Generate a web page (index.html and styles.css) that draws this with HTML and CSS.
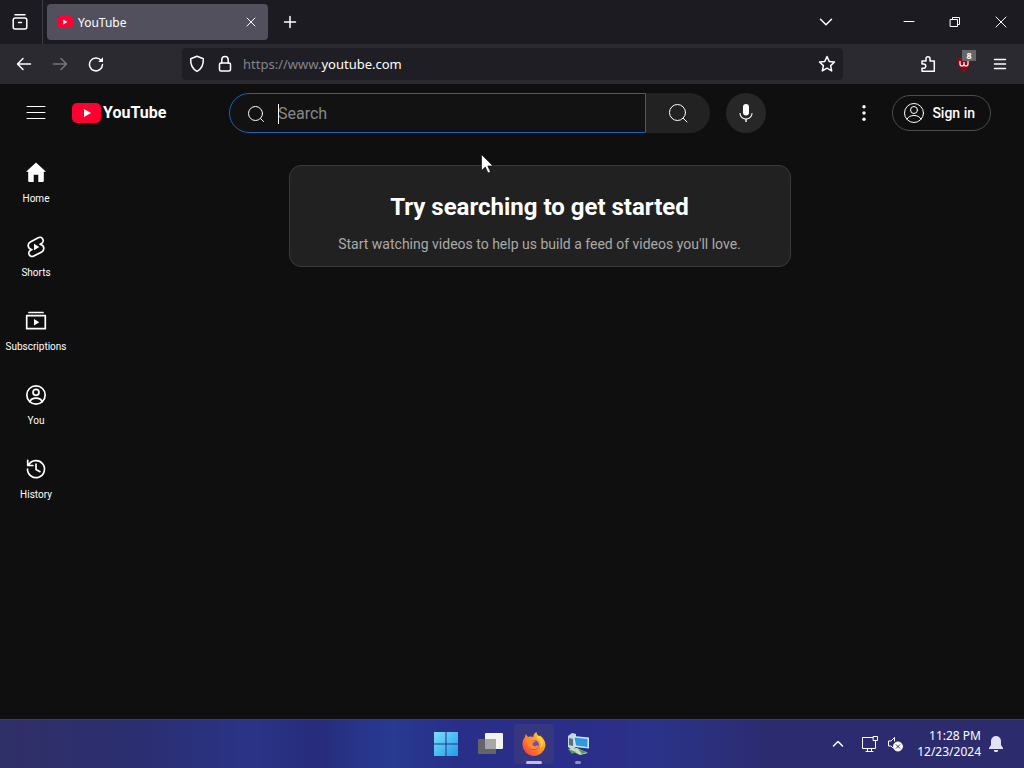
FILE: index.html
```html
<!DOCTYPE html>
<html lang="en">
<head>
<meta charset="utf-8">
<meta name="viewport" content="width=device-width, initial-scale=1">
<title>YouTube</title>
<link rel="stylesheet" href="styles.css">
</head>
<body>
<div class="screen">
  <header class="tabbar">
    <button class="view-button" aria-label="Recent browsing"><svg width="20" height="20" viewBox="0 0 20 20" class="line"><path d="M5 2.800h10M3.200 8.500V8a2 2 0 0 1 2-2h9.600a2 2 0 0 1 2 2v7a2 2 0 0 1-2 2H5.200a2 2 0 0 1-2-2zM8.500 10.500h3"/></svg></button>
    <div class="tab">
      <svg width="18" height="18" viewBox="0 0 18 18"><rect x="1" y="3" width="16" height="12" rx="4" fill="#f03"/><path d="M7.3 6.6v4.8L11.4 9z" fill="#fff"/></svg>
      <span class="tab-title">YouTube</span>
      <button class="tab-close" aria-label="Close tab"><svg width="12" height="12" viewBox="0 0 12 12" class="thin"><path d="M2 2l8 8M10 2l-8 8"/></svg></button>
    </div>
    <button class="new-tab" aria-label="New tab"><svg width="16" height="16" viewBox="0 0 16 16" class="line"><path d="M8 2.500v11M2.500 8h11"/></svg></button>
    <div class="window-controls">
      <button class="list-tabs" aria-label="List all tabs"><svg width="16" height="16" viewBox="0 0 16 16" class="line"><path d="M2.500 5.200L8 10.700l5.500-5.500"/></svg></button>
      <button aria-label="Minimize"><svg width="12" height="12" viewBox="0 0 12 12" class="thin"><path d="M1 5.500h10"/></svg></button>
      <button aria-label="Restore"><svg width="12" height="12" viewBox="0 0 12 12" class="thin"><path d="M1.500 3.500h7v7h-7zM3.500 3.500v-2h7v7h-2"/></svg></button>
      <button aria-label="Close"><svg width="12" height="12" viewBox="0 0 12 12" class="thin"><path d="M1 1l10 10M11 1L1 11"/></svg></button>
    </div>
  </header>

  <nav class="toolbar" aria-label="Navigation">
    <button class="tool" aria-label="Back"><svg width="16" height="16" viewBox="0 0 16 16" class="line"><path d="M14.500 8H1.500M7 2.500L1.500 8 7 13.500"/></svg></button>
    <button class="tool dim" aria-label="Forward"><svg width="16" height="16" viewBox="0 0 16 16" class="line"><path d="M1.500 8h13M9 2.500L14.500 8 9 13.500"/></svg></button>
    <button class="tool" aria-label="Reload"><svg width="16" height="16" viewBox="0 0 16 16" class="line"><path d="M13.200 4.500A6.500 6.500 0 1 0 14.500 8.500"/><path d="M15 1.200V6h-4.800z" fill="currentColor" stroke="none"/></svg></button>
    <div class="urlbar">
      <svg width="16" height="18" viewBox="0 0 16 18" class="line"><path d="M8 1.300L14.300 3.700c.3 5.500-1.300 9.900-6.300 12.700C3 13.600 1.400 9.200 1.700 3.700z"/></svg>
      <svg width="14" height="18" viewBox="0 0 14 18" class="line"><rect x="1.500" y="8" width="11" height="8" rx="1.500"/><path d="M3.800 8V4.800a3.200 3.200 0 0 1 6.400 0V8"/></svg>
      <a class="url" href="#"><span class="url-dim">https://www.</span>youtube.com</a>
      <button class="star" aria-label="Bookmark this page"><svg width="18" height="18" viewBox="0 0 18 18" class="line"><path d="M9 1.500l2.200 4.900 5.300.6-3.900 3.600 1.100 5.300L9 13.200l-4.700 2.700 1.100-5.300L1.500 7l5.300-.6z"/></svg></button>
    </div>
    <div class="extensions">
      <button class="tool" aria-label="Extensions"><svg width="16" height="18" viewBox="0 0 16 18" class="line"><path d="M2 6h4V3.800a2 2 0 0 1 4 0V6h4.300v10.300H2v-3h1.600a2 2 0 0 0 0-4.300H2z"/></svg></button>
      <button class="tool ublock" aria-label="Content blocker"><svg width="16" height="16" viewBox="0 0 16 16"><path d="M8 0c2 1.500 4 2 6 2 0 7-1 10-6 14C3 12 2 9 2 2c2 0 4-.5 6-2z" fill="#950513"/><path d="M4 5v3q0 2 2 2t2-2V6v2q0 2 2 2t2-2V5" fill="none" stroke="#fff" stroke-width="1.200"/></svg><span class="count">8</span></button>
      <button class="tool" aria-label="Application menu"><svg width="14" height="14" viewBox="0 0 14 14" class="line"><path d="M1.500 2.500h11M1.500 7h11M1.500 11.500h11"/></svg></button>
    </div>
  </nav>

  <div class="page">
    <header class="masthead">
      <div class="brand">
        <button class="plain" aria-label="Guide"><svg width="20" height="16" viewBox="0 0 20 16" class="thin"><path d="M1 1.500h18M1 7.500h18M1 13.500h18"/></svg></button>
        <a class="logo" href="#"><svg width="30" height="22" viewBox="0 0 30 22"><rect y="1" width="29" height="20" rx="5" fill="#ff0033"/><path d="M12 7v8l7-4z" fill="#fff"/></svg><span>YouTube</span></a>
      </div>
      <form class="search">
        <div class="field">
          <svg width="18" height="18" viewBox="0 0 18 18" class="thin"><circle cx="8.500" cy="8.500" r="7"/><path d="M13.500 13.500L16.500 16.500"/></svg>
          <div class="entry"><input type="text" placeholder="Search" aria-label="Search"><span class="caret"></span></div>
        </div>
        <button class="search-button" type="button" aria-label="Search"><svg width="20" height="20" viewBox="0 0 20 20" class="thin"><circle cx="9.500" cy="9.500" r="8"/><path d="M15.200 15.200L19 19"/></svg></button>
        <button class="mic" type="button" aria-label="Search with your voice"><svg width="24" height="24" viewBox="0 0 24 24"><path d="M12 3a3 3 0 0 0-3 3v5.500a3 3 0 0 0 6 0V6a3 3 0 0 0-3-3zM17.500 12h1c0 3.600-2.500 6.100-5.800 6.500V21h-1.400v-2.500c-3.300-.4-5.800-2.900-5.800-6.500h1.100c0 3.200 2.300 5.400 5.400 5.400s5.500-2.200 5.500-5.400z" fill="#fff"/></svg></button>
      </form>
      <div class="account">
        <button class="plain" aria-label="Settings"><svg width="24" height="24" viewBox="0 0 24 24" fill="#fff"><circle cx="12" cy="5.800" r="1.700"/><circle cx="12" cy="12" r="1.700"/><circle cx="12" cy="18.200" r="1.700"/></svg></button>
        <a class="signin" href="#"><svg width="22" height="22" viewBox="0 0 22 22" class="thin"><circle cx="11" cy="11" r="9.500"/><circle cx="11" cy="8" r="3.500"/><path d="M4 17.200c1.200-2.700 4-3.700 7-3.700s5.800 1 7 3.700"/></svg>Sign in</a>
      </div>
    </header>

    <div class="body">
      <nav class="guide" aria-label="Guide">
        <a href="#"><svg width="24" height="24" viewBox="0 0 24 24"><path d="M12 1.500L22 10.800h-2.200V20a1 1 0 0 1-1 1h-4.500v-7.200H9.700V21H5.200a1 1 0 0 1-1-1v-9.200H2z" fill="#fff"/></svg><span>Home</span></a>
        <a href="#"><svg width="24" height="24" viewBox="0 0 24 24"><path d="M14.200 2.700L6.300 6.900a4 4 0 0 0 .6 7.300l1 .3-1.300.7a3.300 3.300 0 0 0 3.200 5.900l7.900-4.200a4 4 0 0 0-.6-7.300l-1-.3 1.300-.7a3.300 3.300 0 0 0-3.200-5.900z" class="shape"/><path d="M10 8.700v6.600l5.300-3.300z" fill="#fff"/></svg><span>Shorts</span></a>
        <a href="#"><svg width="24" height="24" viewBox="0 0 24 24"><path d="M5 3.500h14M2.700 6.700h18.600v13H2.700z" class="shape"/><path d="M10 10v6.400l5.300-3.200z" fill="#fff"/></svg><span>Subscriptions</span></a>
        <a href="#"><svg width="24" height="24" viewBox="0 0 24 24"><g class="shape"><circle cx="12" cy="12" r="9.200"/><circle cx="12" cy="9.300" r="3"/><path d="M5.800 18.700c1-2.500 3.400-3.600 6.200-3.600s5.200 1.100 6.200 3.600"/></g></svg><span>You</span></a>
        <a href="#"><svg width="24" height="24" viewBox="0 0 24 24"><g class="shape"><path d="M4.700 7.800A8.500 8.500 0 1 1 3.500 12M3.700 3.300v5.200h5.200M12 7v5.400l4 2.300"/></g></svg><span>History</span></a>
      </nav>
      <main class="feed">
        <section class="nudge">
          <h1>Try searching to get started</h1>
          <p>Start watching videos to help us build a feed of videos you'll love.</p>
        </section>
      </main>
    </div>
    <svg class="pointer" width="13" height="20" viewBox="0 0 13 20"><path d="M.5.5v16l3.800-3.500 2.700 6 2.500-1.100-2.700-5.900H12z" fill="#fff" stroke="#000" stroke-width=".6"/></svg>
  </div>

  <footer class="taskbar">
    <div class="apps">
      <button aria-label="Start"><svg width="24" height="24" viewBox="0 0 24 24"><defs><linearGradient id="win" x1="0" y1="0" x2="1" y2="1"><stop stop-color="#7be0fb"/><stop offset="1" stop-color="#1d9ce8"/></linearGradient></defs><path d="M0 0h11.500v11.500H0zM12.500 0H24v11.500H12.500zM0 12.500h11.500V24H0zM12.500 12.500H24V24H12.500z" fill="url(#win)"/></svg></button>
      <button aria-label="Task view"><svg width="26" height="24" viewBox="0 0 26 24"><rect x="8" y="1" width="18" height="16" rx="1" fill="#f2f2ee"/><rect x="1" y="7" width="18" height="15" rx="1" fill="#666468"/><path d="M8 7h11v10H8z" fill="#a7a6a6"/></svg></button>
      <button class="active" aria-label="Firefox"><svg width="24" height="24" viewBox="0 0 24 24"><defs><linearGradient id="fox" x1="1" y1="0" x2="0" y2="1"><stop stop-color="#ffe43f"/><stop offset=".5" stop-color="#ff8a22"/><stop offset="1" stop-color="#f22b52"/></linearGradient></defs><path d="M3 5c0-1.500.7-2.700 1-3 .5 1.500 1.400 2.300 2.300 3 2-.7 3.700-.4 5 .2C11 3 13 .7 14.500 0c.2 2.500 2 3.500 3.500 5V3.500c4 3 6 7 5.300 11A11.500 11.500 0 0 1 .5 13C.3 9.500 1.300 7 3 5z" fill="url(#fox)"/><circle cx="12" cy="13" r="5" fill="#7547c9"/><path d="M4 8c2-2 5-1.500 6.500.3l3.200.2c-.2 1.500-1.800 1.800-3 2.400-.7 2.400 1.200 3.800 3.500 3 1.500-.5 2.500-.3 2.800.3-2 3.200-5.500 4-8.500 2C5 14 5.500 11 4 8z" fill="#ff8b28"/><path d="M14 5.500c5 2 6 6.500 4 11 4-3 4-9-1-13z" fill="#ffd33b"/></svg></button>
      <button class="running" aria-label="Remote desktop"><svg width="24" height="24" viewBox="0 0 24 24"><path d="M2 4l4-3 4 1v13l-4 3-4-3z" fill="#cbd6dc"/><path d="M3 6l4 1v7l-4-1z" fill="#586f85"/><path d="M7 4l16 1.500v11L9 15z" fill="#d3e6ef"/><path d="M8.500 5.500L21.500 7v8L10 13.500z" fill="#2b9be0"/><path d="M2 17l9-1 11 5-8 2z" fill="#c7d9c0"/><path d="M2 17l8 3-4 2zM12 17l9 3-5 2z" fill="#4aa54b"/></svg></button>
    </div>
    <div class="tray">
      <button aria-label="Show hidden icons"><svg width="12" height="12" viewBox="0 0 12 12" class="line"><path d="M1.500 8L6 3.500 10.500 8"/></svg></button>
      <svg width="18" height="18" viewBox="0 0 18 18" class="thin"><path d="M12 2.500H1.500v11h13V8M5 16.500h7M6.500 13.500v3M10.500 13.500v3M12.500 1.500h4v4h-4zM14.500 5.500v4"/></svg>
      <svg width="16" height="16" viewBox="0 0 16 16" class="thin"><path d="M7.500 5V1.500L4 5H1.500v5H4l2 2"/><circle cx="11" cy="10.500" r="4.500" fill="#fff"/><path d="M9.200 8.700l3.600 3.600M12.800 8.700l-3.600 3.600" stroke="#292b70"/></svg>
      <div class="clock"><time>11:28 PM</time><time>12/23/2024</time></div>
      <svg width="14" height="16" viewBox="0 0 14 16"><path d="M7 0a5 5 0 0 0-5 5v4l-2 3v1h14v-1l-2-3V5a5 5 0 0 0-5-5zM4.800 14h4.400a2.200 2.200 0 0 1-4.400 0z" fill="#e3e2fa"/></svg>
    </div>
  </footer>
</div>
</body>
</html>
```
FILE: styles.css
```css
* { box-sizing: border-box; }
body { margin: 0; background: #0f0f0f; color: #fff; font-family: Roboto, sans-serif; }
button { padding: 0; border: 0; background: none; color: inherit; font: inherit; display: flex; align-items: center; justify-content: center; }
a { color: inherit; text-decoration: none; }
svg { display: block; flex: none; }
.line, .thin, .shape { fill: none; stroke: currentColor; stroke-width: 1.5; stroke-linecap: round; stroke-linejoin: round; }
.thin { stroke-width: 1; }
.shape { stroke-width: 1.7; }
.screen { min-height: 100vh; display: flex; flex-direction: column; }

.tabbar { height: 44px; display: flex; align-items: center; background: #1c1b22; font-family: "Noto Sans", sans-serif; }
.view-button { width: 43px; height: 44px; padding-right: 2px; border-right: 1px solid #3b3a48; }
.tab { width: 221px; height: 36px; margin-left: 4px; padding: 0 8px 0 9px; display: flex; align-items: center; border-radius: 4px; background: #52505c; font-size: 12px; }
.tab-title { flex: 1; margin-left: 4px; }
.tab-close { width: 18px; height: 24px; }
.new-tab { width: 36px; height: 36px; margin-left: 4px; }
.window-controls { margin-left: auto; display: flex; }
.window-controls button { width: 46px; height: 44px; }
.window-controls .list-tabs { width: 36px; margin-right: 42px; }

.toolbar { height: 40px; padding: 0 6px; display: flex; align-items: center; background: #2b2a31; }
.tool { width: 36px; height: 32px; }
.dim { color: #77767d; }
.urlbar { flex: 1; height: 32px; margin: 0 67px 0 68px; padding: 0 7px; display: flex; align-items: center; border-radius: 4px; background: #1f1e25; }
.urlbar svg + svg { margin-left: 13px; }
.url { flex: 1; margin-left: 11px; font: 13px/20px "Noto Sans", sans-serif; }
.url-dim { color: #85848b; }
.extensions { display: flex; }
.ublock { position: relative; }
.count { position: absolute; top: 2px; right: 6px; width: 14px; background: #666; font: bold 9px/11px "Noto Sans", sans-serif; text-align: center; }

.page { flex: 1; position: relative; padding-right: 17px; display: flex; flex-direction: column; }
.masthead { height: 56px; padding: 2px 16px 0; display: grid; grid-template-columns: 213px 1fr 225px; align-items: center; }
.brand, .search, .account { display: flex; align-items: center; }
.plain { width: 40px; height: 40px; }
.logo { margin-left: 16px; display: flex; align-items: center; gap: 1px; font: bold 16px/24px Roboto, sans-serif; }
.field { flex: 1; min-width: 0; height: 40px; padding: 1px 0 0 17px; display: flex; align-items: center; border: 1px solid #1c62b9; border-radius: 20px 0 0 20px; background: #121212; }
.entry { flex: 1; min-width: 0; position: relative; margin-left: 13px; }
.entry input { display: block; width: 100%; padding: 0; border: 0; outline: 0; background: none; color: #fff; font: 16px/24px Roboto, sans-serif; }
.entry input::placeholder { color: #888; opacity: 1; }
.caret { position: absolute; top: 2px; left: 0; width: 1px; height: 20px; background: #fff; }
.search-button { width: 64px; height: 40px; border-radius: 0 20px 20px 0; background: #222; }
.mic { width: 40px; height: 40px; margin-left: 16px; border-radius: 50%; background: #272727; }
.account { justify-content: flex-end; gap: 8px; }
.signin { height: 36px; padding: 0 15px 0 10px; display: flex; align-items: center; gap: 7px; border: 1px solid #4c4c4c; border-radius: 18px; font-size: 14px; font-weight: 500; white-space: nowrap; }

.body { flex: 1; display: flex; }
.guide { width: 72px; padding-top: 5px; }
.guide a { height: 74px; padding-top: 16px; display: flex; flex-direction: column; align-items: center; gap: 7px; font-size: 10px; line-height: 14px; }
.feed { flex: 1; padding-top: 25px; }
.nudge { max-width: 502px; margin: 0 auto; padding: 23px 16px 11px; border: 1px solid #393939; border-radius: 12px; background: #212121; text-align: center; }
.nudge h1 { margin: 0; font-size: 24px; line-height: 36px; }
.nudge p { margin: 8px 0 0; color: #aaa; font-size: 14px; line-height: 22px; }
.pointer { position: absolute; left: 481px; top: 70px; }

.taskbar { height: 49px; display: grid; grid-template-columns: 1fr auto 1fr; align-items: center; border-top: 1px solid #37405f; background: linear-gradient(90deg, #302f67 0%, #2b2e71 14%, #2a3488 25%, #272c7b 31%, #283a91 38%, #292e88 45%, #2c2e88 60%, #2a3389 64%, #2c2b70 75%, #2c2b6e 100%); font-family: "Noto Sans", sans-serif; }
.apps { grid-column: 2; display: flex; gap: 4px; }
.apps button { position: relative; width: 40px; height: 40px; border-radius: 4px; }
.apps .active { background: #373681; }
.active::after, .running::after { content: ""; position: absolute; bottom: 0; width: 16px; height: 3px; border-radius: 2px; background: #c5b9ea; }
.running::after { width: 6px; background: #8d8fc5; }
.tray { justify-self: end; padding-right: 21px; display: flex; align-items: center; }
.tray button { width: 28px; height: 32px; margin-right: 9px; }
.tray svg + svg { margin-left: 8px; }
.clock { margin: 0 8px 0 14px; display: flex; flex-direction: column; font-size: 12px; line-height: 16px; text-align: right; }
```
